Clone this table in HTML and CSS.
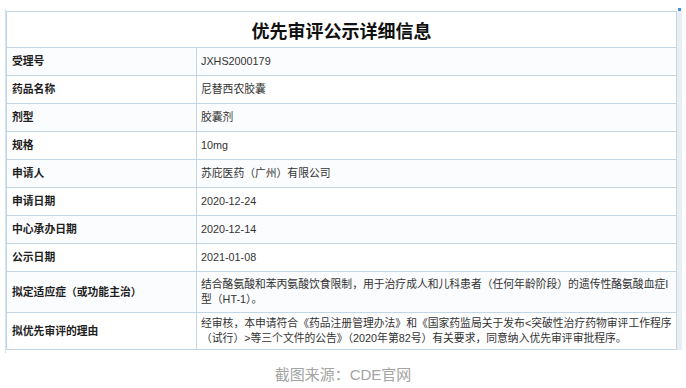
FILE: index.html
```html
<!DOCTYPE html>
<html lang="zh-CN">
<head>
<meta charset="utf-8">
<link rel="stylesheet" href="styles.css">
</head>
<body>
<div class="frame">
  <div class="info">
    <div class="title">优先审评公示详细信息</div>
    <div class="row alt"><div class="label">受理号</div><div class="value">JXHS2000179</div></div>
    <div class="row"><div class="label">药品名称</div><div class="value">尼替西农胶囊</div></div>
    <div class="row alt"><div class="label">剂型</div><div class="value">胶囊剂</div></div>
    <div class="row"><div class="label">规格</div><div class="value">10mg</div></div>
    <div class="row alt"><div class="label">申请人</div><div class="value">苏庇医药（广州）有限公司</div></div>
    <div class="row"><div class="label">申请日期</div><div class="value">2020-12-24</div></div>
    <div class="row alt"><div class="label">中心承办日期</div><div class="value">2020-12-14</div></div>
    <div class="row"><div class="label">公示日期</div><div class="value">2021-01-08</div></div>
    <div class="row alt tall"><div class="label">拟定适应症（或功能主治）</div><div class="value">结合酪氨酸和苯丙氨酸饮食限制，用于治疗成人和儿科患者（任何年龄阶段）的遗传性酪氨酸血症I<br>型（HT-1）。</div></div>
    <div class="row tall2"><div class="label">拟优先审评的理由</div><div class="value">经审核，本申请符合《药品注册管理办法》和《国家药监局关于发布&lt;突破性治疗药物审评工作程序<br>（试行）&gt;等三个文件的公告》（2020年第82号）有关要求，同意纳入优先审评审批程序。</div></div>
  </div>
  <div class="strip"></div>
</div>
<p class="caption">截图来源：CDE官网</p>
</body>
</html>
```

FILE: styles.css
```css
html, body {
  margin: 0;
  padding: 0;
  background: #ffffff;
}

body {
  font-family: "Liberation Sans", "Noto Sans CJK SC", sans-serif;
  color: #333;
}

.frame {
  display: flex;
  margin: 9px 0 0 5px;
  width: 677px;
  border-left: 1px solid #d3e2f0;
  padding: 2px 0 3px 0;
}

.info {
  width: 671px;
  box-sizing: border-box;
  border-top: 1px solid #c3d6e8;
  border-left: 1px solid #c3d6e8;
}

.title {
  height: 36px;
  box-sizing: border-box;
  border-right: 1px solid #c3d6e8;
  border-bottom: 1px solid #c3d6e8;
  display: flex;
  align-items: center;
  justify-content: center;
  font-size: 18px;
  font-weight: 700;
  color: #111;
}

.row {
  display: grid;
  grid-template-columns: 190px 480px;
  height: 28px;
}

.row.alt {
  background: #fbfcfd;
}

.row.tall {
  height: 41px;
}

.row.tall2 {
  height: 37px;
}

.label, .value {
  box-sizing: border-box;
  border-right: 1px solid #c3d6e8;
  border-bottom: 1px solid #c3d6e8;
  display: flex;
  align-items: center;
  font-size: 10.8px;
  line-height: 15px;
}

.label {
  padding-left: 5px;
  font-weight: 700;
  color: #1e1e1e;
}

.value {
  padding-left: 4px;
  color: #333;
}

.strip {
  width: 5px;
  background: #e9eef3;
  position: relative;
}

.strip::before {
  content: "";
  position: absolute;
  top: -3px;
  left: 1px;
  width: 3px;
  height: 3px;
  background: #4a8fdc;
}

.caption {
  margin: 12px 0 0 0;
  text-align: center;
  font-size: 15px;
  line-height: 20px;
  color: #a4a4a4;
}
```
